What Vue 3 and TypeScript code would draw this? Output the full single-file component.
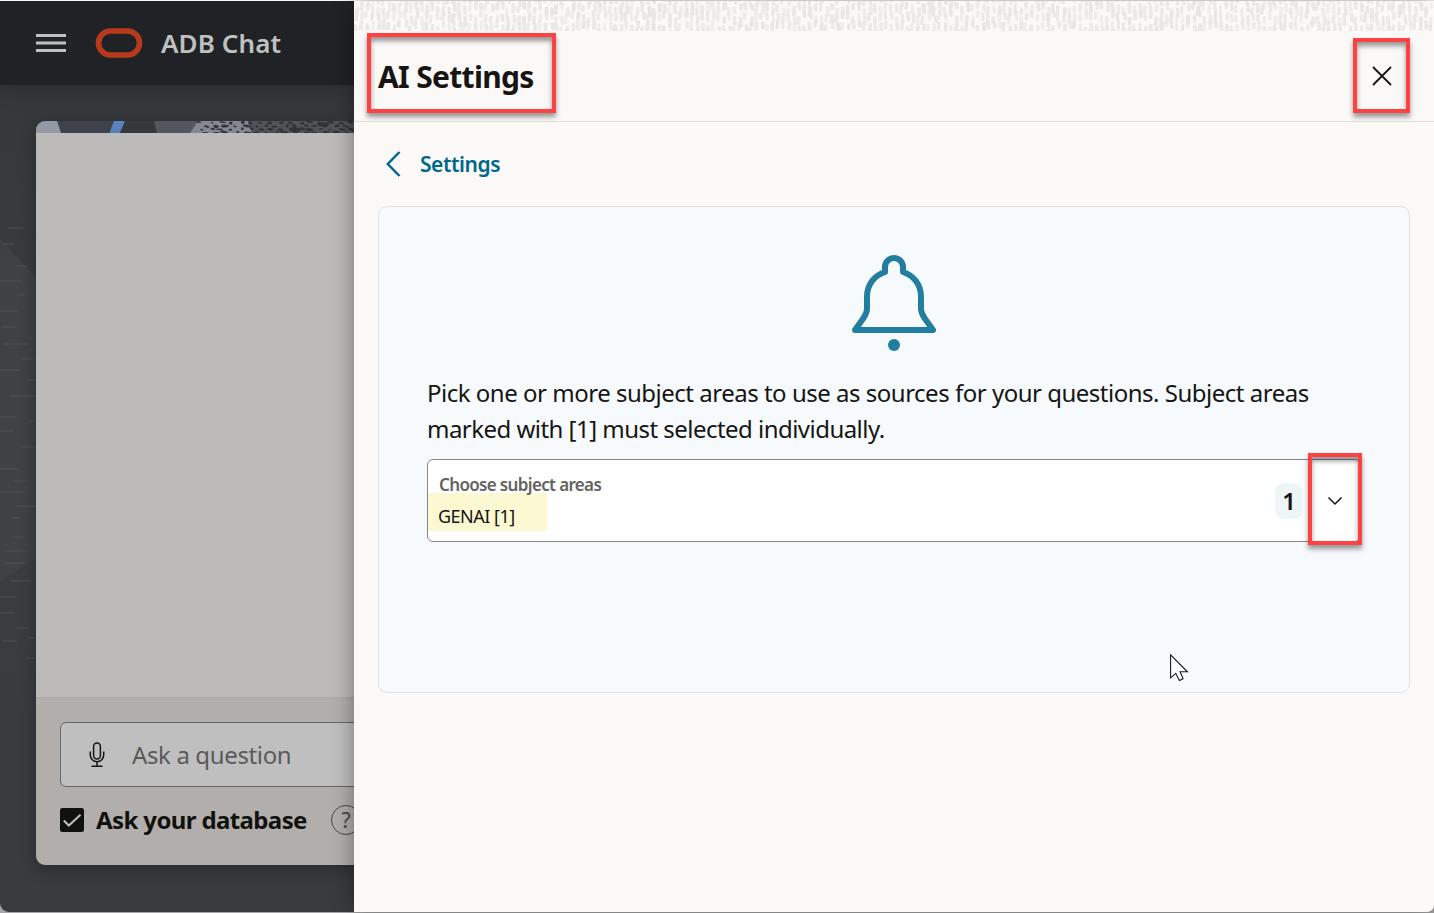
<script setup lang="ts">
interface Mark { x: number; y: number; w: number; h: number; r: number; o: number }

function rng(seed: number) {
  let s = seed
  return () => {
    s = (s * 16807) % 2147483647
    return s / 2147483647
  }
}

const a = rng(77)
const flecks: Mark[] = []
for (let row = -1; row < 4; row++) {
  for (let i = 0; i < 200; i++) {
    flecks.push({ x: i * 5.4 + a() * 2, y: row * 9 + a() * 7, w: 2.8 + a() * 1.2, h: 7 + a() * 4, r: -7 + a() * 14, o: 0.6 + a() * 0.4 })
  }
}

const b = rng(31)
const stones: Mark[] = []
for (let row = 0; row < 4; row++) {
  for (let i = 0; i < 16; i++) {
    stones.push({ x: 163 + i * 10 + (row % 2) * 5 + b() * 4, y: 1 + row * 3.3 + b() * 1.4, w: 1.2 + b() * 3, h: 0.7 + b() * 0.9, r: -5 + b() * 20, o: 0.9 })
  }
}
stones.push({ x: 259, y: 8.5, w: 6, h: 2.4, r: 5, o: 1 }, { x: 287, y: 3.5, w: 6, h: 2.2, r: 3, o: 1 })

const dashes: number[][] = [
  [8, 27, 16], [3, 43, 12], [15, 65, 13], [0, 80, 22], [17, 94, 8], [0, 110, 18], [1, 126, 15], [4, 143, 24],
  [21, 158, 13], [0, 169, 20], [27, 179, 9], [10, 195, 26], [0, 216, 16], [28, 220, 8], [0, 230, 14],
  [20, 246, 16], [0, 268, 20], [13, 280, 14], [0, 291, 25], [16, 305, 20], [11, 317, 9], [12, 336, 12],
  [4, 350, 23], [4, 362, 21], [10, 380, 21], [0, 396, 16], [0, 412, 15], [16, 427, 13], [27, 437, 9],
  [2, 440, 15], [26, 457, 10],
]
</script>

<template>
  <div class="window">
    <div class="app">
      <header class="topbar">
        <svg class="menu" width="30" height="18" viewBox="0 0 30 18"><path d="M0 1.500h30M0 9h30M0 16.500h30" stroke="#c0c0c0" stroke-width="3" /></svg>
        <svg class="logo" width="48" height="30" viewBox="0 0 48 30"><rect x="3.500" y="3" width="41" height="24" rx="12" fill="none" stroke="#b73a1d" stroke-width="5.600" /></svg>
        <span class="brand">ADB Chat</span>
      </header>
      <main class="stage">
        <svg class="backdrop" width="36" height="480" viewBox="0 0 36 480">
          <path d="M0 38L36 78V358L0 382Z" fill="#3e4245" />
          <g fill="#505556" opacity=".4"><rect v-for="(d, i) in dashes" :key="i" :x="d[0]" :y="d[1]" :width="d[2]" height="2" rx="1" /></g>
        </svg>
        <section class="chat">
          <svg class="strip" width="330" height="12" viewBox="0 0 330 12">
            <rect width="330" height="12" fill="#3e424a" />
            <path d="M0 0H21L25 12H0Z" fill="#949aa5" />
            <path d="M78 0H89L84 12H73.500Z" fill="#5a82bd" />
            <path d="M89 0H118L121 12H84Z" fill="#36393c" />
            <path d="M118 0H162L154 12H121Z" fill="#52565e" />
            <path d="M162 0H212L216 12H154Z" fill="#838893" />
            <path d="M212 0H330V12H216Z" fill="#505358" />
            <ellipse v-for="(s, i) in stones" :key="i" :cx="s.x" :cy="s.y" :rx="s.w" :ry="s.h" fill="#303236" :transform="`rotate(${s.r} ${s.x} ${s.y})`" />
          </svg>
          <div class="messages"></div>
          <div class="composer">
            <div class="ask">
              <svg class="mic" width="16" height="26" viewBox="0 0 16 26" fill="none" stroke="#151515" stroke-width="1.500"><rect x="4.600" y="1" width="6.800" height="16" rx="3.400" /><path d="M1.300 9.500V13a6.700 6.700 0 0 0 13.400 0V9.500M8 19.500V24M2.500 24.200h11" /></svg>
              <span class="placeholder">Ask a question</span>
            </div>
            <div class="option">
              <svg class="check" width="24" height="24" viewBox="0 0 24 24"><rect width="24" height="24" rx="2.500" fill="#11120f" /><path d="M3.800 12.500l5 5L20.500 6.800" fill="none" stroke="#c0bebc" stroke-width="2" /></svg>
              <span class="optlabel">Ask your database</span>
              <span class="help"><span>?</span></span>
            </div>
          </div>
        </section>
      </main>
    </div>

    <aside class="drawer">
      <svg class="texture" width="1080" height="30" viewBox="0 0 1080 30">
        <rect v-for="(f, i) in flecks" :key="i" :x="f.x" :y="f.y" :width="f.w" :height="f.h" rx="1.500" fill="#e8e6e4" :opacity="f.o" :transform="`rotate(${f.r} ${f.x} ${f.y})`" />
      </svg>
      <div class="heading">
        <div class="callout title-box"><h1>AI Settings</h1></div>
        <div class="callout close-box">
          <svg width="20" height="20" viewBox="0 0 20 20"><path d="M1 1L19 19M19 1L1 19" stroke="#161513" stroke-width="1.800" /></svg>
        </div>
      </div>
      <a class="back">
        <svg width="16" height="26" viewBox="0 0 16 26"><path d="M14.500 1L2.800 13L14.500 25" fill="none" stroke="#00688c" stroke-width="2.500" /></svg>
        <span>Settings</span>
      </a>
      <section class="card">
        <svg class="bell" width="86" height="98" viewBox="0 0 86 98">
          <path d="M34 18V13a9 9 0 0 1 18 0v5C63 21.500 70 31 70 42.500v12c0 4 1.800 7 3.800 10L82 76H4l8.200-11.500c2-3 3.800-6 3.800-10v-12C16 31 23 21.500 34 18" fill="none" stroke="#227e9e" stroke-width="6" stroke-linecap="round" stroke-linejoin="round" />
          <circle cx="43" cy="91" r="6" fill="#227e9e" />
        </svg>
        <p><span class="line1">Pick one or more subject areas to use as sources for your questions. Subject areas</span><br /><span class="line2">marked with [1] must selected individually.</span></p>
        <div class="select">
          <div class="field">
            <span class="label">Choose subject areas</span>
            <div class="value"><span>GENAI [1]</span></div>
          </div>
          <span class="count">1</span>
          <div class="callout arrow-box">
            <svg width="16" height="10" viewBox="0 0 16 10"><path d="M1.500 1.500L8 8L14.500 1.500" fill="none" stroke="#161513" stroke-width="1.500" /></svg>
          </div>
        </div>
      </section>
    </aside>
    <svg class="cursor" width="20" height="29" viewBox="0 0 20 29"><path d="M.6.800V23.800L5.800 19.300L9.400 26.600L13.100 24.800L10.100 17.800H17.400Z" fill="#fff" stroke="#171b26" stroke-width="1.100" /></svg>
  </div>
</template>

<style>
html, body { margin: 0; background: #fff; }
</style>

<style scoped>
* { box-sizing: border-box; }
.window { position: relative; display: flex; width: 1434px; height: 913px; padding-top: 1px; overflow: hidden; background: #a6a6a6; font-family: "Noto Sans", "Open Sans", sans-serif; color: #161513; }
.window::before { content: ""; position: absolute; left: 0; top: 0; width: 100%; height: 1px; background: #fdf8f4; }
.app { width: 354px; height: 911px; display: flex; flex-direction: column; overflow: hidden; background: linear-gradient(#34373a, #3a3e41 45%, #3a3b3f 80%); border-bottom-left-radius: 9px; }
.topbar { position: relative; flex: none; height: 84px; display: flex; align-items: center; padding-left: 36px; background: #212225; box-shadow: 0 3px 20px rgba(0,0,0,.25); }
.logo { margin-left: 29px; }
.brand { margin-left: 18px; font-size: 26px; font-weight: 600; color: #c0c0c0; white-space: nowrap; letter-spacing: .1px; }
.stage { position: relative; flex: 1; padding: 36px 0 0 36px; }
.backdrop { position: absolute; left: 0; top: 115px; }
.chat { position: relative; width: 330px; height: 744px; border-radius: 9px; overflow: hidden; box-shadow: 0 4px 16px rgba(0,0,0,.3); }
.strip { display: block; }
.strip, .messages, .composer { width: 330px; }
.messages { height: 564px; background: #bcbbb9; }
.composer { height: 168px; padding: 24px 0 0 24px; background: #b2aeab; border-top: 1px solid #aaa9a8; }
.ask { height: 65px; display: flex; align-items: center; border: 1px solid #666; border-radius: 6px; background: #bfbfbf; }
.mic { margin-left: 28px; }
.placeholder { margin-left: 27px; font-size: 24px; color: #5a5a5a; white-space: nowrap; letter-spacing: -.37px; }
.option { display: flex; align-items: center; height: 30px; margin-top: 18px; }
.optlabel { margin-left: 12px; width: 211px; font-size: 24px; font-weight: 700; line-height: 30px; white-space: nowrap; color: #11120f; letter-spacing: -.62px; }
.help { flex: none; margin-left: 24px; width: 30px; height: 30px; border: 1.500px solid #484745; border-radius: 50%; display: grid; place-items: center; font-size: 21px; line-height: 25px; color: #484745; }
.drawer { position: relative; width: 1080px; height: 911px; display: flex; flex-direction: column; background: #faf9f7; box-shadow: 0 0 22px rgba(0,0,0,.4); border-bottom-right-radius: 7px; }
.texture { flex: none; display: block; overflow: hidden; border-radius: 9px 9px 0 0; }
.heading { flex: none; height: 91px; display: flex; justify-content: space-between; align-items: flex-start; padding: 2px 24px 0 13px; border-bottom: 1px solid #e0dedc; }
.callout { border: 4px solid #fe4241; box-shadow: 0 4px 5px rgba(0,0,0,.4), inset 0 4px 5px rgba(0,0,0,.4); }
.title-box { width: 189px; height: 80px; padding-left: 7px; display: flex; align-items: center; }
h1 { margin: 8px 0 0; font-size: 30px; line-height: 40px; font-weight: 700; white-space: nowrap; letter-spacing: -.68px; }
.close-box { width: 57px; height: 75px; margin-top: 5px; padding-left: 1px; display: grid; place-items: center; }
.back { display: flex; align-items: center; height: 30px; margin: 27px 0 27px 31px; gap: 19px; font-size: 21px; font-weight: 600; color: #00688c; letter-spacing: -.45px; }
.card { display: flex; flex-direction: column; align-items: flex-start; width: 1032px; height: 487px; margin-left: 24px; padding: 47px 48px 0 48px; background: #f6fafd; border: 1px solid #e0e1e1; border-radius: 9px; }
.bell { flex: none; align-self: center; }
p { width: 935px; margin: 23px 0 0; font-size: 24px; line-height: 36px; white-space: nowrap; }
.line1 { letter-spacing: -.49px; }
.line2 { letter-spacing: -.53px; }
.select { width: 934px; height: 83px; margin-top: 12px; display: flex; align-items: center; background: #fff; border: 1px solid #85858a; border-radius: 6px; flex: none; }
.field { flex: 1; height: 81px; padding-top: 15px; }
.label { display: block; margin-left: 11px; font-size: 17px; line-height: 20px; font-weight: 600; color: #64635f; letter-spacing: -.65px; }
.value { width: 119px; height: 38px; margin-top: -2px; padding: 6px 0 0 10px; background: #fbf8d2; font-size: 18px; letter-spacing: -.5px; }
.value span { display: block; line-height: 34px; }
.count { width: 28px; height: 36px; border-radius: 9px; background: #edf5f6; display: grid; place-items: center; font-size: 24px; font-weight: 600; }
.arrow-box { position: relative; top: -2px; width: 54px; height: 92px; padding-top: 4px; margin: 0 -2px 0 5px; display: grid; place-items: center; flex: none; }
.cursor { position: absolute; left: 1170px; top: 654px; }
</style>
